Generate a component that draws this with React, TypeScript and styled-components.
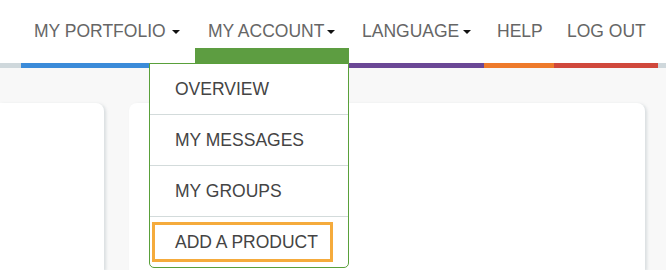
import React from 'react';
import styled, { createGlobalStyle } from 'styled-components';

interface INavItem {
    label: string;
    color: string;
    width: number;
    caret?: boolean;
    active?: boolean;
    caretGap?: number;
}

const navItems: INavItem[] = [
    { label: 'MY PORTFOLIO', color: '#3b8bd9', width: 174, caret: true, caretGap: 6 },
    { label: 'MY ACCOUNT', color: '#5d9d41', width: 154, caret: true, active: true, caretGap: 3 },
    { label: 'LANGUAGE', color: '#6a4795', width: 135, caret: true, caretGap: 4 },
    { label: 'HELP', color: '#ee7a2b', width: 70 },
    { label: 'LOG OUT', color: '#d0483c', width: 104 },
];

const menuItems = ['OVERVIEW', 'MY MESSAGES', 'MY GROUPS', 'ADD A PRODUCT'];

const App: React.FC = () => {
    return (
        <>
            <GlobalStyle />
            <Page>
                <Header>
                    <Nav>
                        {navItems.map((item) => (
                            <NavItem key={item.label} $width={item.width}>
                                <NavLabel>
                                    {item.label}
                                    {item.caret && <Caret $gap={item.caretGap ?? 4} />}
                                </NavLabel>
                                <NavBar $color={item.color} $active={!!item.active} />
                                {item.active && (
                                    <Dropdown>
                                        {menuItems.map((entry, index) => (
                                            <MenuItem key={entry}>
                                                <MenuLink $focused={index === menuItems.length - 1}>
                                                    {entry}
                                                </MenuLink>
                                            </MenuItem>
                                        ))}
                                    </Dropdown>
                                )}
                            </NavItem>
                        ))}
                    </Nav>
                </Header>
                <Main>
                    <Card $clipped />
                    <Card />
                </Main>
            </Page>
        </>
    );
};

const GlobalStyle = createGlobalStyle`
    html, body {
        margin: 0;
        padding: 0;
        background: #ffffff;
        font-family: "Liberation Sans", Arial, sans-serif;
    }
    * {
        box-sizing: border-box;
    }
`;

const Page = styled.div`
    width: 666px;
    height: 270px;
    overflow: hidden;
    display: flex;
    flex-direction: column;
`;

const Header = styled.header`
    height: 68px;
    display: flex;
    justify-content: flex-end;
    padding-right: 8px;
    background: linear-gradient(to top, #cfd8dc 5px, #ffffff 5px);
    position: relative;
    z-index: 2;
`;

const Nav = styled.nav`
    display: flex;
    height: 100%;
`;

const NavItem = styled.div<{ $width: number }>`
    position: relative;
    display: flex;
    flex-direction: column;
    width: ${(p) => p.$width}px;
    height: 100%;
    cursor: pointer;
`;

const NavLabel = styled.span`
    display: flex;
    align-items: center;
    padding: 21px 0 0 13px;
    height: 41px;
    font-size: 17.5px;
    line-height: 20px;
    color: #666666;
    white-space: nowrap;
`;

const Caret = styled.span<{ $gap: number }>`
    display: inline-block;
    width: 0;
    height: 0;
    margin-left: ${(p) => p.$gap}px;
    margin-top: 2px;
    border-top: 4px solid #111111;
    border-left: 4px solid transparent;
    border-right: 4px solid transparent;
`;

const NavBar = styled.div<{ $color: string; $active: boolean }>`
    margin-top: auto;
    height: ${(p) => (p.$active ? 20 : 5)}px;
    background: ${(p) => p.$color};
`;

const Dropdown = styled.ul`
    position: absolute;
    top: 63px;
    right: 0;
    width: 200px;
    margin: 0;
    padding: 0;
    list-style: none;
    background: #ffffff;
    border: 1px solid #59a03a;
    border-radius: 0 0 5px 5px;
`;

const MenuItem = styled.li`
    height: 51px;
    padding: 5px 0 5px 2px;
    border-bottom: 1px solid #d3dbdb;

    &:last-child {
        height: 50px;
        border-bottom: none;
    }
`;

const MenuLink = styled.a<{ $focused: boolean }>`
    display: inline-block;
    height: 40px;
    padding: 0 12px 0 20px;
    border: 3px solid ${(p) => (p.$focused ? '#f5ab3c' : 'transparent')};
    font-size: 17.5px;
    line-height: 34px;
    color: #444444;
    white-space: nowrap;
`;

const Main = styled.main`
    flex: 1;
    display: grid;
    grid-template-columns: 104px 1fr;
    column-gap: 25px;
    padding: 35px 21px 0 0;
    background: #f8f8f8;
`;

const Card = styled.div<{ $clipped?: boolean }>`
    background: #ffffff;
    border-radius: ${(p) => (p.$clipped ? '0 8px 0 0' : '8px 8px 0 0')};
    box-shadow: 2px 1px 3px rgba(160, 175, 180, 0.35);
`;

export default App;
